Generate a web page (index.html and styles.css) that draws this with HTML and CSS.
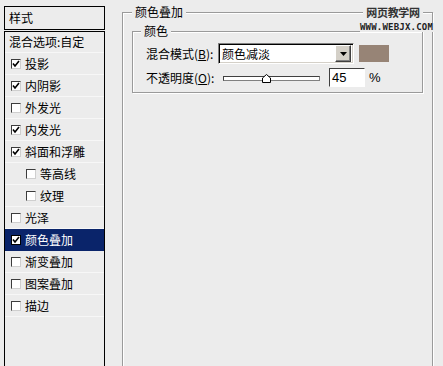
FILE: index.html
```html
<!DOCTYPE html>
<html lang="zh-CN">
<head>
<meta charset="utf-8">
<title>图层样式 - 颜色叠加</title>
<link rel="stylesheet" href="styles.css">
</head>
<body>
<div class="page">
  <div class="styles-panel">
    <div class="panel-head">样式</div>
    <ul class="style-list">
      <li class="row row-blend">混合选项:自定</li>
      <li class="row"><span class="cb on"><svg viewBox="0 0 8 8"><polyline points="1,3.5 3,6 7,1"/></svg></span>投影</li>
      <li class="row"><span class="cb on"><svg viewBox="0 0 8 8"><polyline points="1,3.5 3,6 7,1"/></svg></span>内阴影</li>
      <li class="row"><span class="cb"></span>外发光</li>
      <li class="row"><span class="cb on"><svg viewBox="0 0 8 8"><polyline points="1,3.5 3,6 7,1"/></svg></span>内发光</li>
      <li class="row"><span class="cb on"><svg viewBox="0 0 8 8"><polyline points="1,3.5 3,6 7,1"/></svg></span>斜面和浮雕</li>
      <li class="row sub"><span class="cb"></span>等高线</li>
      <li class="row sub"><span class="cb"></span>纹理</li>
      <li class="row"><span class="cb"></span>光泽</li>
      <li class="row selected"><span class="cb on"><svg viewBox="0 0 8 8"><polyline points="1,3.5 3,6 7,1"/></svg></span>颜色叠加</li>
      <li class="row"><span class="cb"></span>渐变叠加</li>
      <li class="row"><span class="cb"></span>图案叠加</li>
      <li class="row"><span class="cb"></span>描边</li>
    </ul>
  </div>

  <div class="options">
    <div class="group outer">
      <div class="group-title">颜色叠加</div>
      <div class="group inner">
        <div class="group-title inner-title">颜色</div>
        <div class="form">
          <div class="form-row">
            <span class="label">混合模式(<u>B</u>):</span>
            <div class="select">
              <span class="select-text">颜色减淡</span>
              <span class="select-btn"><svg viewBox="0 0 7 4"><polygon points="0,0 7,0 3.5,4"/></svg></span>
            </div>
            <span class="swatch"></span>
          </div>
          <div class="form-row row2">
            <span class="label">不透明度(<u>O</u>):</span>
            <div class="slider">
              <span class="track"></span>
              <svg class="thumb" viewBox="0 0 9 9"><polygon points="4.5,0.5 8.5,4 8.5,8.5 0.5,8.5 0.5,4"/></svg>
            </div>
            <div class="num">45</div>
            <span class="pct">%</span>
          </div>
        </div>
      </div>
    </div>
  </div>
</div>
<div class="watermark">
  <div class="wm-cn">网页教学网</div>
  <div class="wm-en">WWW.WEBJX.COM</div>
</div>
</body>
</html>
```

FILE: styles.css
```css
* { box-sizing: border-box; }

html, body {
  margin: 0;
  padding: 0;
}

body {
  width: 443px;
  height: 366px;
  overflow: hidden;
  background: #ececec;
  color: #000;
  font: 12px/16px "Noto Sans CJK SC", "Liberation Sans", sans-serif;
  position: relative;
}

.page {
  display: flex;
  align-items: flex-start;
  padding: 6px 0 0 4px;
}

/* ---------- left list ---------- */
.styles-panel {
  width: 101px;
  flex: none;
}

.panel-head {
  border: 1px solid #000;
  height: 24px;
  line-height: 22px;
  padding-left: 4px;
}

.style-list {
  list-style: none;
  margin: 1px 0 0;
  padding: 0;
  border: 1px solid #000;
  border-bottom: none;
  height: 335px;
}

.row {
  display: flex;
  align-items: center;
  height: 22px;
  padding-left: 6px;
  border-bottom: 1px solid #f7f7f7;
  white-space: nowrap;
}

.row-blend {
  height: 21px;
  padding-left: 4px;
}

.row.sub { padding-left: 21px; }

.row.selected {
  background: #0a246a;
  color: #fff;
  border-bottom-color: #0a246a;
}

.cb {
  width: 10px;
  height: 10px;
  flex: none;
  margin-right: 4px;
  background: #fff;
  border-top: 1px solid #3c3c3c;
  border-left: 1px solid #3c3c3c;
  border-right: 1px solid #cfcfcf;
  border-bottom: 1px solid #cfcfcf;
  display: flex;
}

.selected .cb {
  border: 1px solid #000;
}

.cb svg {
  width: 8px;
  height: 8px;
}

.cb polyline {
  fill: none;
  stroke: #000;
  stroke-width: 1.6;
}

/* ---------- right options ---------- */
.options {
  margin-left: 17px;
  margin-top: 6px;
  width: 311px;
  flex: none;
}

.group {
  border: 1px solid #9a9a9a;
  box-shadow: inset 1px 1px 0 #fff, 1px 1px 0 #fff;
}

.outer {
  height: 354px;
  border-bottom: none;
}

.group-title {
  display: table;
  margin: -9px 0 0 9px;
  padding: 0 3px;
  line-height: 16px;
  background: #ececec;
}

.inner {
  margin: 11px 9px 0 9px;
}

.inner-title {
  margin-left: 8px;
}

.form {
  padding: 4px 0 5px 13px;
}

.form-row {
  display: flex;
  align-items: center;
  height: 21px;
}

.row2 {
  margin-top: 4px;
  height: 19px;
}

.label {
  width: 72px;
  flex: none;
  white-space: nowrap;
}

.label u { text-decoration: underline; }

.select {
  width: 136px;
  height: 21px;
  background: #fff;
  border-top: 1px solid #808080;
  border-left: 1px solid #808080;
  border-right: 1px solid #fff;
  border-bottom: 1px solid #fff;
  box-shadow: inset 1px 1px 0 #000, inset -1px -1px 0 #d4d0c8;
  display: flex;
  align-items: center;
  padding: 0 2px 0 3px;
}

.select-text {
  flex: 1;
}

.select-btn {
  width: 16px;
  height: 17px;
  background: #d4d0c8;
  border-top: 1px solid #fff;
  border-left: 1px solid #fff;
  border-right: 1px solid #404040;
  border-bottom: 1px solid #404040;
  box-shadow: inset -1px -1px 0 #808080;
  display: flex;
  align-items: center;
  justify-content: center;
}

.select-btn svg {
  width: 7px;
  height: 4px;
}

.select-btn polygon { fill: #000; }

.swatch {
  width: 30px;
  height: 17px;
  margin-left: 5px;
  background: #978476;
}

.slider {
  position: relative;
  width: 97px;
  height: 19px;
  margin-left: 5px;
  display: flex;
  align-items: center;
}

.track {
  width: 97px;
  height: 5px;
  margin-top: 2px;
  background: #fff;
  border-top: 1px solid #404040;
  border-left: 1px solid #404040;
  border-right: 1px solid #808080;
  border-bottom: 1px solid #808080;
}

.thumb {
  position: absolute;
  left: 39px;
  top: 6px;
  width: 9px;
  height: 9px;
}

.thumb polygon {
  fill: #fff;
  stroke: #000;
  stroke-width: 1;
}

.num {
  width: 36px;
  height: 19px;
  margin-left: 9px;
  background: #fff;
  border-top: 1px solid #404040;
  border-left: 1px solid #404040;
  border-right: 1px solid #fff;
  border-bottom: 1px solid #fff;
  padding-left: 2px;
  font: 13px/17px "Liberation Sans", sans-serif;
}

.pct {
  margin-left: 4px;
  font: 13px/17px "Liberation Sans", sans-serif;
}

/* ---------- watermark overlay ---------- */
.watermark {
  position: absolute;
  left: 360px;
  top: 5px;
  width: 74px;
}

.wm-cn {
  width: 60px;
  margin-left: 3px;
  background: #ececec;
  text-align: center;
  font-size: 11px;
  line-height: 15px;
  color: #333;
  letter-spacing: -0.3px;
  font-weight: bold;
}

.wm-en {
  margin-top: 3px;
  font: bold 9px/9px "DejaVu Sans Mono", monospace;
  color: #222;
  letter-spacing: 0.2px;
  background: #ececec;
  white-space: nowrap;
}
```
